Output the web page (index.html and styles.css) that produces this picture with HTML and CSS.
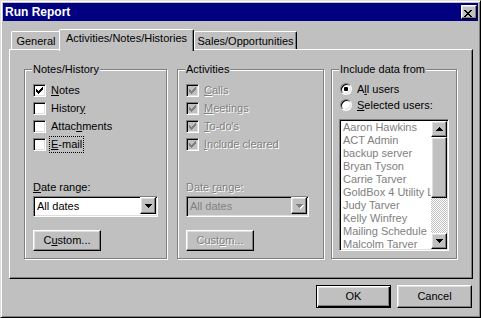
FILE: index.html
```html
<!DOCTYPE html>
<html>
<head>
<meta charset="utf-8">
<title>Run Report</title>
<link rel="stylesheet" href="styles.css">
</head>
<body>
<div class="window">
  <div class="titlebar">
    <span class="title">Run Report</span>
    <button class="close raised"><svg width="8" height="7" viewBox="0 0 8 7"><path d="M0 0h2v1h-2zM6 0h2v1h-2zM1 1h2v1h-2zM5 1h2v1h-2zM2 2h4v1h-4zM3 3h2v1h-2zM2 4h4v1h-4zM1 5h2v1h-2zM5 5h2v1h-2zM0 6h2v1h-2zM6 6h2v1h-2z"/></svg></button>
  </div>

  <div class="tabs">
    <div class="tab tab-general">General</div>
    <div class="tab tab-active">Activities/Notes/Histories</div>
    <div class="tab tab-sales">Sales/Opportunities</div>
  </div>

  <div class="panel">
    <fieldset class="group group-notes">
      <legend>Notes/History</legend>
      <label class="check"><span class="box"><svg viewBox="0 0 7 7"><path d="M6 0h1v1h-1zM5 1h2v1h-2zM0 2h1v1h-1zM4 2h3v1h-3zM0 3h2v1h-2zM3 3h3v1h-3zM0 4h5v1h-5zM1 5h3v1h-3zM2 6h1v1h-1z"/></svg></span><span><u>N</u>otes</span></label>
      <label class="check"><span class="box"></span><span>Histor<u>y</u></span></label>
      <label class="check"><span class="box"></span><span>Attac<u>h</u>ments</span></label>
      <label class="check"><span class="box"></span><span class="focus"><u>E</u>-mail</span></label>

      <div class="range">
        <div class="field-label"><u>D</u>ate range:</div>
        <div class="combo combo-notes"><span class="combo-text">All dates</span><span class="drop raised"><svg width="7" height="4" viewBox="0 0 7 4"><path d="M0 0h7v1h-7zM1 1h5v1h-5zM2 2h3v1h-3zM3 3h1v1h-1z"/></svg></span></div>
        <button class="btn custom">C<u>u</u>stom...</button>
      </div>
    </fieldset>

    <fieldset class="group group-activities">
      <legend>Activities</legend>
      <label class="check disabled"><span class="box"><svg viewBox="0 0 7 7"><path d="M6 0h1v1h-1zM5 1h2v1h-2zM0 2h1v1h-1zM4 2h3v1h-3zM0 3h2v1h-2zM3 3h3v1h-3zM0 4h5v1h-5zM1 5h3v1h-3zM2 6h1v1h-1z"/></svg></span><span><u>C</u>alls</span></label>
      <label class="check disabled"><span class="box"><svg viewBox="0 0 7 7"><path d="M6 0h1v1h-1zM5 1h2v1h-2zM0 2h1v1h-1zM4 2h3v1h-3zM0 3h2v1h-2zM3 3h3v1h-3zM0 4h5v1h-5zM1 5h3v1h-3zM2 6h1v1h-1z"/></svg></span><span><u>M</u>eetings</span></label>
      <label class="check disabled"><span class="box"><svg viewBox="0 0 7 7"><path d="M6 0h1v1h-1zM5 1h2v1h-2zM0 2h1v1h-1zM4 2h3v1h-3zM0 3h2v1h-2zM3 3h3v1h-3zM0 4h5v1h-5zM1 5h3v1h-3zM2 6h1v1h-1z"/></svg></span><span><u>T</u>o-do's</span></label>
      <label class="check disabled"><span class="box"><svg viewBox="0 0 7 7"><path d="M6 0h1v1h-1zM5 1h2v1h-2zM0 2h1v1h-1zM4 2h3v1h-3zM0 3h2v1h-2zM3 3h3v1h-3zM0 4h5v1h-5zM1 5h3v1h-3zM2 6h1v1h-1z"/></svg></span><span><u>I</u>nclude cleared</span></label>

      <div class="range">
        <div class="field-label disabled">Date <u>r</u>ange:</div>
        <div class="combo combo-activities disabled"><span class="combo-text">All dates</span><span class="drop raised"><svg width="8" height="5" viewBox="0 0 8 5"><path fill="#fff" d="M1 1h7v1h-7zM2 2h5v1h-5zM3 3h3v1h-3zM4 4h1v1h-1z"/><path fill="#808080" d="M0 0h7v1h-7zM1 1h5v1h-5zM2 2h3v1h-3zM3 3h1v1h-1z"/></svg></span></div>
        <button class="btn custom disabled">Cust<u>o</u>m...</button>
      </div>
    </fieldset>

    <fieldset class="group group-include">
      <legend>Include data from</legend>
      <label class="radio"><span class="dot checked"></span><span>A<u>l</u>l users</span></label>
      <label class="radio"><span class="dot"></span><span><u>S</u>elected users:</span></label>

      <div class="listbox">
        <ul class="list">
          <li>Aaron Hawkins</li>
          <li>ACT Admin</li>
          <li>backup server</li>
          <li>Bryan Tyson</li>
          <li>Carrie Tarver</li>
          <li>GoldBox 4 Utility Login</li>
          <li>Judy Tarver</li>
          <li>Kelly Winfrey</li>
          <li>Mailing Schedule</li>
          <li>Malcolm Tarver</li>
        </ul>
        <div class="scrollbar">
          <span class="arrow raised"><svg width="7" height="4" viewBox="0 0 7 4"><path d="M3 0h1v1h-1zM2 1h3v1h-3zM1 2h5v1h-5zM0 3h7v1h-7z"/></svg></span>
          <span class="thumb raised"></span>
          <span class="track"></span>
          <span class="arrow raised"><svg width="7" height="4" viewBox="0 0 7 4"><path d="M0 0h7v1h-7zM1 1h5v1h-5zM2 2h3v1h-3zM3 3h1v1h-1z"/></svg></span>
        </div>
      </div>
    </fieldset>
  </div>

  <div class="actions">
    <button class="btn btn-default">OK</button>
    <button class="btn">Cancel</button>
  </div>
</div>
</body>
</html>
```

FILE: styles.css
```css
body {
    margin: 0;
    font-family: "Liberation Sans", Arial, sans-serif;
    font-size: 11px;
    line-height: 13px;
    color: #000;
}

/* bevels */
.raised {
    border: 1px solid;
    border-color: #fff #000 #000 #fff;
    box-shadow: inset -1px -1px #808080, inset 1px 1px #dfdfdf;
    background: #c0c0c0;
}

.window {
    width: 481px;
    height: 318px;
    box-sizing: border-box;
    background: #c0c0c0;
    border: 1px solid;
    border-color: #dfdfdf #000 #000 #dfdfdf;
    box-shadow: inset 1px 1px #fff, inset -1px -1px #808080;
    padding: 2px;
    display: flex;
    flex-direction: column;
}

.titlebar {
    height: 18px;
    background: #000080;
    color: #fff;
    display: flex;
    align-items: center;
    padding-left: 2px;
}
.title {
    flex: 1;
    font-weight: bold;
    font-size: 12px;
}
.close {
    width: 16px;
    height: 14px;
    box-sizing: border-box;
    margin-right: 1px;
    padding: 3px 0 0 2px;
}
.close svg { display: block; }

/* tabs */
.tabs {
    display: flex;
    align-items: flex-end;
    margin: 8px 0 0 8px;
}
.tab {
    height: 18px;
    box-sizing: border-box;
    padding-top: 3px;
    text-align: center;
    border: 1px solid;
    border-bottom: none;
    border-color: #fff #000 #000 #fff;
    border-radius: 2px 2px 0 0;
    box-shadow: inset -1px 0 #808080;
    background: #c0c0c0;
}
.tab-general { width: 50px; }
.tab-active {
    width: 135px;
    height: 22px;
    margin: 0 0 -2px -2px;
    padding-top: 2px;
    position: relative;
    z-index: 1;
}
.tab-sales { width: 103px; }

.panel {
    height: 230px;
    box-sizing: border-box;
    margin: 0 5px 0 6px;
    border: 1px solid;
    border-color: #fff #000 #000 #fff;
    box-shadow: inset -1px -1px #808080;
    padding: 13px 0 19px 14px;
    display: flex;
}

/* group boxes */
.group {
    margin: 0;
    padding: 5px 0 7px 8px;
    min-width: 0;
    box-sizing: border-box;
    border: 1px solid #808080;
    box-shadow: inset 1px 1px #fff, 1px 1px #fff;
    display: flex;
    flex-direction: column;
}
.group legend {
    padding: 0 1px;
    margin-left: -1px;
    background: #c0c0c0;
    line-height: 13px;
}
.group-notes { width: 143px; margin-right: 10px; }
.group-activities { width: 147px; margin-right: 7px; }
.group-include { width: 126px; }

.check, .radio {
    display: flex;
    align-items: center;
    height: 18px;
}
.radio { height: 16px; }

.box {
    width: 13px;
    height: 13px;
    box-sizing: border-box;
    flex: none;
    margin-right: 5px;
    border: 1px solid;
    border-color: #808080 #fff #fff #808080;
    box-shadow: inset 1px 1px #000, inset -1px -1px #dfdfdf;
    background: #fff;
    padding: 2px;
}
.box svg { display: block; width: 7px; height: 7px; }

.focus {
    outline: 1px dotted #000;
    padding: 1px;
    margin-left: -1px;
}

.disabled { color: #808080; text-shadow: 1px 1px 0 #fff; }
.check.disabled .box { background: #c0c0c0; }
.check.disabled .box svg { fill: #808080; }

.dot {
    width: 12px;
    height: 12px;
    box-sizing: border-box;
    flex: none;
    margin-right: 5px;
    border-radius: 50%;
    border: 1px solid;
    border-color: #808080 #fff #fff #808080;
    box-shadow: inset 1px 1px #000, inset -1px -1px #dfdfdf;
    background: #fff;
}
.dot.checked {
    background: radial-gradient(circle, #000 0 2px, #fff 2.5px);
}

.range {
    margin-top: auto;
}
.field-label {
    height: 13px;
    margin-bottom: 2px;
}
.combo {
    height: 21px;
    box-sizing: border-box;
    display: flex;
    border: 1px solid;
    border-color: #808080 #fff #fff #808080;
    box-shadow: inset 1px 1px #000, inset -1px -1px #dfdfdf;
    background: #fff;
    padding: 1px;
}
.combo-notes { width: 125px; }
.combo-activities { width: 123px; }
.combo.disabled { background: #c0c0c0; text-shadow: none; }
.combo-text {
    flex: 1;
    padding: 1px 0 0 2px;
    line-height: 15px;
}
.drop {
    width: 16px;
    height: 17px;
    box-sizing: border-box;
    display: flex;
    align-items: center;
    justify-content: center;
    margin-top: -1px;
}
.drop svg { display: block; }
.combo.disabled .drop svg { margin: 1px 0 0 1px; }

/* buttons */
.btn {
    font: inherit;
    color: inherit;
    padding: 0;
    height: 23px;
    width: 75px;
    box-sizing: border-box;
    border: 1px solid;
    border-color: #fff #000 #000 #fff;
    box-shadow: inset -1px -1px #808080, inset 1px 1px #dfdfdf;
    background: #c0c0c0;
}
.btn.custom {
    display: block;
    width: 68px;
    height: 21px;
    margin-top: 13px;
}
.btn.disabled {
    color: #808080;
    text-shadow: 1px 1px 0 #fff;
}
.btn-default {
    border-color: #000;
    box-shadow: inset 1px 1px #fff, inset -1px -1px #000, inset -2px -2px #808080, inset 2px 2px #dfdfdf;
}

/* list */
.listbox {
    width: 110px;
    height: 132px;
    box-sizing: border-box;
    margin: 6px 0 0 -1px;
    display: flex;
    border: 1px solid;
    border-color: #808080 #fff #fff #808080;
    box-shadow: inset 1px 1px #000, inset -1px -1px #dfdfdf;
    background: #fff;
    padding: 1px;
}
.list {
    flex: 1;
    min-width: 0;
    margin: 0;
    padding: 0 0 0 2px;
    list-style: none;
    overflow: hidden;
    white-space: nowrap;
    color: #808080;
}
.scrollbar {
    width: 16px;
    display: flex;
    flex-direction: column;
}
.arrow {
    height: 16px;
    box-sizing: border-box;
    display: flex;
    align-items: center;
    justify-content: center;
}
.arrow svg { display: block; }
.thumb {
    height: 61px;
    box-sizing: border-box;
}
.track {
    flex: 1;
    background: repeating-conic-gradient(#c0c0c0 0 25%, #fff 0 50%) 0 0 / 2px 2px;
}

.actions {
    display: flex;
    justify-content: flex-end;
    gap: 6px;
    margin-top: 6px;
    padding-right: 6px;
}
```
